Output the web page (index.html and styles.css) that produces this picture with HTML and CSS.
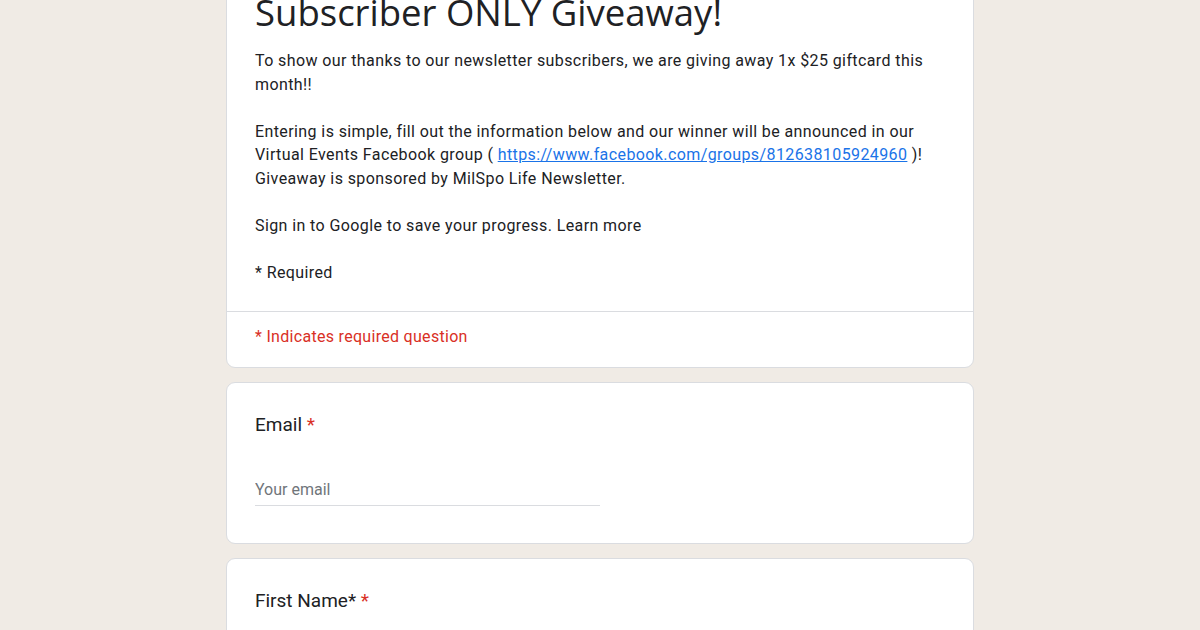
FILE: index.html
```html
<!DOCTYPE html>
<html lang="en">
<head>
  <meta charset="UTF-8" />
  <meta name="viewport" content="width=device-width, initial-scale=1" />
  <title>Subscriber ONLY Giveaway!</title>
  <link rel="stylesheet" href="styles.css">
</head>
<body>
  <div class="container">
    <div class="card header-card">
      <div class="header-main">
        <h1>Subscriber ONLY Giveaway!</h1>
        <div class="description">To show our thanks to our newsletter subscribers, we are giving away 1x $25 giftcard this month!!

Entering is simple, fill out the information below and our winner will be announced in our Virtual Events Facebook group ( <a href="#">https://www.facebook.com/groups/812638105924960</a> )! Giveaway is sponsored by MilSpo Life Newsletter.

Sign in to Google to save your progress. Learn more

* Required</div>
      </div>
      <div class="required-note">* Indicates required question</div>
    </div>

    <div class="card question">
      <div class="question-title">Email <span class="star">*</span></div>
      <input type="email" class="answer" placeholder="Your email" />
    </div>

    <div class="card question">
      <div class="question-title">First Name* <span class="star">*</span></div>
      <input type="text" class="answer" placeholder="Your answer" />
    </div>
  </div>
</body>
</html>
```

FILE: styles.css
```css
/* Fondo y fuente */
body {
  font-family: Roboto, "Liberation Sans", sans-serif;
  background-color: #f0ebe5;
  margin: 0;
  color: #202124;
}

/* Contenedor principal (desplazado como la captura) */
.container {
  width: 748px;
  margin: -61px auto 0;
}

.card {
  background-color: #fff;
  border: 1px solid #dadce0;
  border-radius: 9px;
  margin-bottom: 14px;
}

/* Tarjeta del encabezado */
.header-main {
  padding: 48px 28px 27px;
  border-bottom: 1px solid #dadce0;
}

h1 {
  font-family: "Open Sans", Roboto, sans-serif;
  font-weight: 400;
  font-size: 36.5px;
  line-height: 48px;
  letter-spacing: 0;
  margin: 0 0 13px;
}

.description {
  font-size: 16px;
  line-height: 23.5px;
  letter-spacing: 0.4px;
  white-space: pre-wrap;
}

.description a {
  color: #1a73e8;
}

.required-note {
  color: #d93025;
  font-size: 16px;
  line-height: 24px;
  letter-spacing: 0.3px;
  padding: 13px 28px 18px;
}

/* Preguntas */
.question {
  padding: 28px 28px 37px;
}

.question-title {
  font-size: 19px;
  line-height: 28px;
}

.star {
  color: #d93025;
}

.answer {
  display: block;
  width: 345px;
  height: 32px;
  margin-top: 35px;
  padding: 0;
  border: none;
  border-bottom: 1px solid #dadce0;
  font-family: Roboto, sans-serif;
  font-size: 16px;
  color: #202124;
  outline: none;
  box-sizing: border-box;
}

.answer::placeholder {
  color: #70757a;
}
```
